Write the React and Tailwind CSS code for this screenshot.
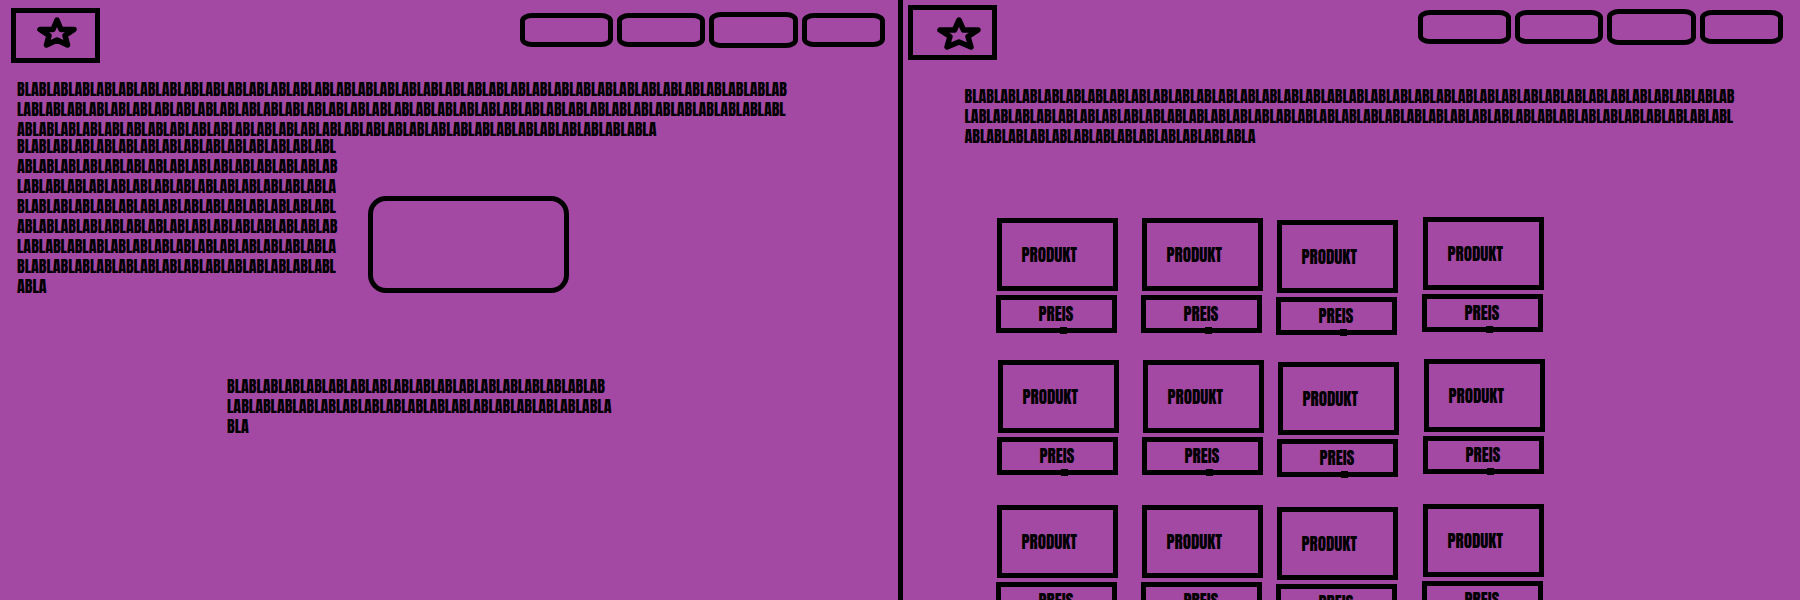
const TEXT = "BLA".repeat(104);

// Each entry is the number of letters on one line; the text runs on from line to line.
const INTRO_LINES = [106, 106, 88];
const ASIDE_LINES = [44, 44, 44, 44, 44, 44, 44, 4];
const NOTE_LINES = [52, 53, 3];
const SHOP_LINES = [106, 106, 40];

const NAV_ITEMS = [
  "h-[34px] w-[93px]",
  "h-[34px] w-[88px]",
  "h-[36px] w-[89px]",
  "h-[34px] w-[83px]",
];

const ROWS = ["", "mt-6 pl-px", "mt-[27px]"];
const COLUMNS = ["pt-px", "pt-px", "pt-[3px]", ""];

function Copy({ lines, className = "" }) {
  let start = 0;
  const parts = lines.map((count) => {
    const part = TEXT.slice(start, start + count);
    start += count;
    return part;
  });
  return (
    <p className={`whitespace-pre font-[Anton,Impact,sans-serif] text-[16px] leading-5 ${className}`}>
      {parts.join("\n")}
    </p>
  );
}

function Star({ className, points, viewBox }) {
  return (
    <svg viewBox={viewBox} className={className} fill="none" stroke="black" strokeWidth="5.5" strokeLinejoin="round" aria-hidden="true">
      <polygon points={points} />
    </svg>
  );
}

function Header({ className, children }) {
  return (
    <header className={`flex items-start justify-between ${className}`}>
      <a href="#" aria-label="Home" className="flex h-[55px] w-[89px] border-5 border-black">
        {children}
      </a>
      <nav className="mt-1 flex items-center gap-1">
        {NAV_ITEMS.map((size, i) => (
          <a key={i} href="#" aria-label={`Menu ${i + 1}`} className={`rounded-[12px/8px] border-5 border-black ${size}`} />
        ))}
      </nav>
    </header>
  );
}

function Product() {
  return (
    <article className="w-[121px] font-[Anton,Impact,sans-serif] text-[17px] leading-5">
      <h2 className="ml-px flex h-[73px] w-[121px] items-center border-5 border-black pl-5">PRODUKT</h2>
      <p className="relative mt-1 flex h-[38px] items-center justify-center border-5 border-black">
        PREIS
        <span className="absolute -bottom-1.5 left-[59px] size-[7px] bg-black" />
      </p>
    </article>
  );
}

export default function App() {
  return (
    <div className="flex h-screen overflow-hidden bg-[#a349a4] text-black">
      <section className="min-w-0 flex-1 border-r-5 border-black">
        <Header className="pt-2 pr-[13px] pl-[11px]">
          <Star className="mt-1 ml-[21px] h-[31px] w-10" viewBox="0 0 40 31" points="20,3 24,12.5 37,12.5 28,18.5 30.5,28 20,23 9.5,28 12,18.5 3,12.5 16,12.5" />
        </Header>
        <main>
          <Copy lines={INTRO_LINES} className="mt-4 ml-[17px]" />
          <div className="-mt-[3px] flex items-start">
            <Copy lines={ASIDE_LINES} className="ml-[17px] w-[324px]" />
            <div className="mt-[60px] ml-[27px] h-[97px] w-[201px] rounded-[18px] border-5 border-black" />
          </div>
          <Copy lines={NOTE_LINES} className="mt-20 ml-[227px]" />
        </main>
      </section>
      <section className="min-w-0 flex-1">
        <Header className="pt-[5px] pr-[17px] pl-[5px]">
          <Star className="mt-[7px] ml-6 h-[33px] w-11" viewBox="0 0 44 33" points="22,3 26.5,13 41,13 31,19.5 34,30 22,25 10,30 13,19.5 3,13 17.5,13" />
        </Header>
        <main>
          <Copy lines={SHOP_LINES} className="mt-[26px] ml-[62px]" />
          <div className="mt-[71px] ml-[93px]">
            {ROWS.map((row, r) => (
              <div key={r} className={`grid grid-cols-[145px_135px_146px_121px] ${row}`}>
                {COLUMNS.map((column, c) => (
                  <div key={c} className={column}>
                    <Product />
                  </div>
                ))}
              </div>
            ))}
          </div>
        </main>
      </section>
    </div>
  );
}
